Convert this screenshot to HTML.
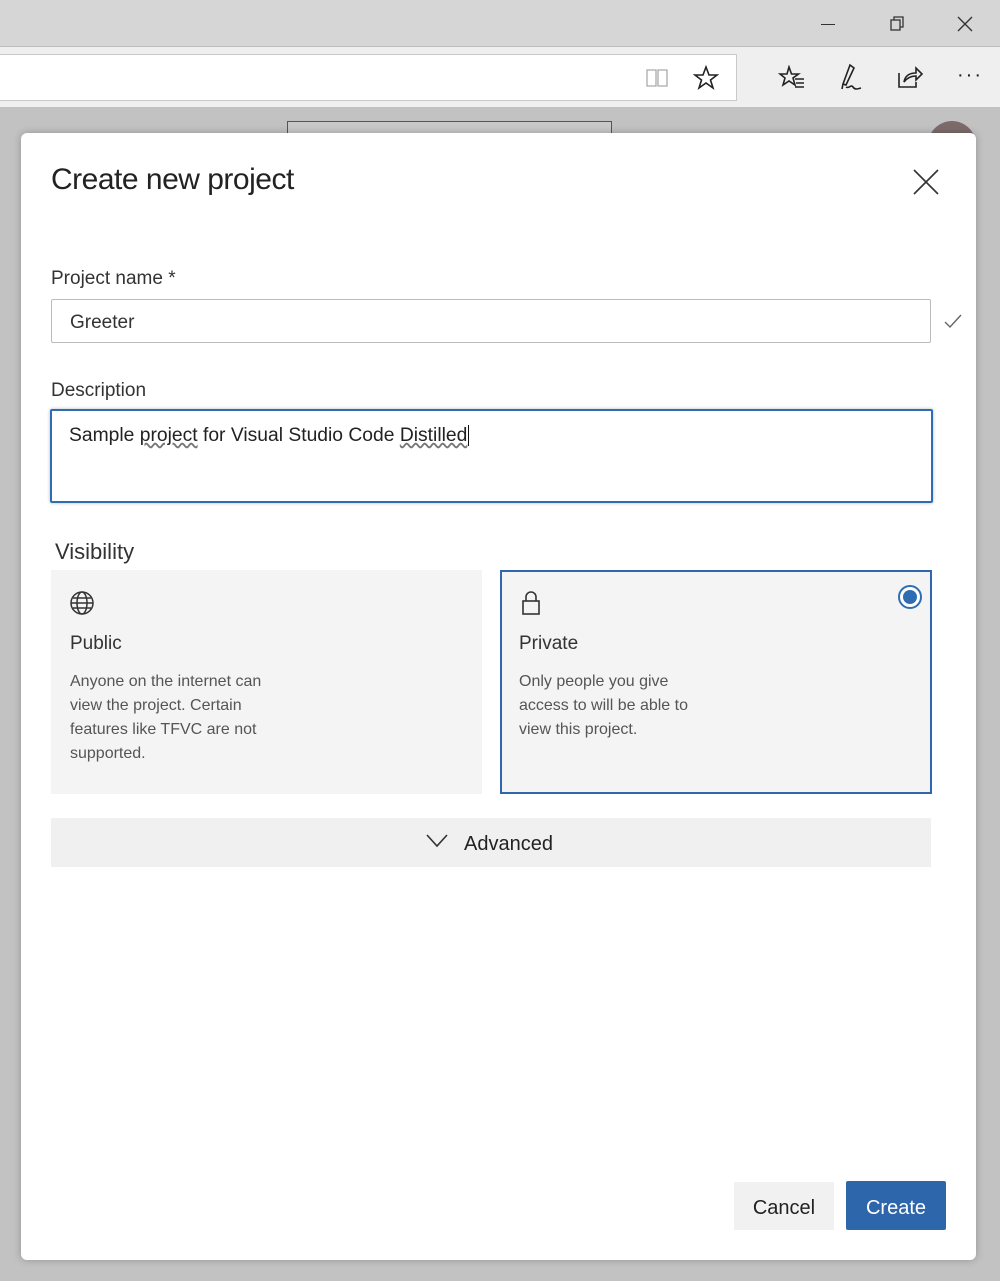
<!DOCTYPE html>
<html><head><meta charset="utf-8"><style>
*{box-sizing:border-box;margin:0;padding:0}
body{width:1000px;height:1281px;position:relative;overflow:hidden;background:#c4c4c4;font-family:"Liberation Sans",sans-serif;color:#222}
.abs{position:absolute}
.titlebar{left:0;top:0;width:1000px;height:47px;background:#d6d6d6;border-bottom:1px solid #bdbdbd}
.navbar{left:0;top:47px;width:1000px;height:60px;background:#efefef}
.addr{left:0;top:54px;width:737px;height:47px;background:#fff;border:1px solid #c9c9c9;border-left:none}
.page{left:0;top:107px;width:1000px;height:1174px;background:#c2c2c2}
.modal{left:21px;top:133px;width:955px;height:1127px;background:#fff;border-radius:6px;box-shadow:0 0 8px rgba(0,0,0,.25)}
.lbl{font-size:19px;color:#333}
.card{background:#f4f4f4}
.ct{font-size:19px;color:#333}
.cd{font-size:16px;line-height:24px;color:#555}
</style></head><body>
<div class="abs titlebar"></div>
<div class="abs" style="left:821px;top:24px;width:14px;height:1px;background:#333"></div>
<svg class="abs" style="left:888px;top:15px" width="18" height="18" viewBox="0 0 18 18" fill="none" stroke="#333" stroke-width="1.3"><rect x="3" y="5" width="9" height="10"/><path d="M6 5V2h9v10h-3"/></svg>
<svg class="abs" style="left:956px;top:15px" width="18" height="18" viewBox="0 0 18 18" stroke="#333" stroke-width="1.4"><path d="M2 2L16 16M16 2L2 16"/></svg>
<div class="abs navbar"></div>
<div class="abs addr"></div>
<svg class="abs" style="left:645px;top:67px" width="24" height="22" viewBox="0 0 24 22" fill="none" stroke="#aaa" stroke-width="1.3"><path d="M2 3h9v16H2zM13 3h9v16h-9z"/></svg>
<svg class="abs" style="left:693px;top:65px" width="26" height="26" viewBox="0 0 26 26" fill="none" stroke="#222" stroke-width="1.6"><path d="M13 2l3 8h8l-6.5 5 2.5 8-7-5-7 5 2.5-8L2 10h8z"/></svg>
<svg class="abs" style="left:778px;top:65px" width="28" height="26" viewBox="0 0 28 26" fill="none" stroke="#222" stroke-width="1.6"><path d="M11 2l2.5 7h7l-5.5 4 2 7-6-4-6 4 2-7L2 9h7z"/><path d="M17 14h9M18 18h8M17 22h9"/></svg>
<svg class="abs" style="left:838px;top:63px" width="26" height="30" viewBox="0 0 26 30" fill="none" stroke="#222" stroke-width="1.6"><path d="M12 2l4 3-8 17-3-1zM5 21l-1 5M8 24c3 2 5-3 7 0s4 2 8 1"/></svg>
<svg class="abs" style="left:896px;top:64px" width="28" height="26" viewBox="0 0 28 26" fill="none" stroke="#222" stroke-width="1.6"><path d="M3 9v14h17v-5M8 18c1-6 5-9 12-9V4l6 6-6 6v-4c-5 0-9 2-12 6z"/></svg>
<div class="abs" style="left:957px;top:64px;font-size:20px;color:#222;letter-spacing:2px">···</div>
<div class="abs page"></div>
<div class="abs" style="left:287px;top:121px;width:325px;height:20px;border:1.5px solid #555;border-bottom:none;background:#c9c9c9"></div>
<div class="abs" style="left:928px;top:121px;width:48px;height:48px;border-radius:50%;background:#7d6b6b"></div>
<div class="abs modal">
  <div class="abs" style="left:30px;top:30px;font-size:30px;color:#222;letter-spacing:-0.5px">Create new project</div>
  <svg class="abs" style="left:892px;top:36px" width="26" height="26" viewBox="0 0 26 26" stroke="#333" stroke-width="1.6"><path d="M1 1L25 25M25 1L1 25"/></svg>
  <div class="abs lbl" style="left:30px;top:135px">Project name *</div>
  <div class="abs" style="left:30px;top:166px;width:880px;height:44px;border:1px solid #bbb;border-radius:2px"></div>
  <div class="abs" style="left:49px;top:179px;font-size:19px;color:#333">Greeter</div>
  <svg class="abs" style="left:922px;top:180px" width="20" height="16" viewBox="0 0 20 16" fill="none" stroke="#666" stroke-width="1.4"><path d="M2 9l5 5L18 2"/></svg>
  <div class="abs lbl" style="left:30px;top:247px">Description</div>
  <div class="abs" style="left:29px;top:276px;width:883px;height:94px;border:2px solid #2f6db3;border-radius:2px;box-shadow:0 0 3px rgba(0,0,0,.3)"></div>
  <div class="abs" style="left:48px;top:292px;font-size:19.3px;color:#222">Sample <span style="text-decoration:underline wavy #777">project</span> for Visual Studio Code <span style="text-decoration:underline wavy #777">Distilled</span><span style="border-left:1.5px solid #111;margin-left:1px"></span></div>
  <div class="abs" style="left:34px;top:406px;font-size:22px;color:#333">Visibility</div>
  <div class="abs card" style="left:30px;top:437px;width:431px;height:224px"></div>
  <svg class="abs" style="left:48px;top:457px" width="26" height="26" viewBox="0 0 26 26" fill="none" stroke="#333" stroke-width="1.5"><circle cx="13" cy="13" r="11"/><ellipse cx="13" cy="13" rx="5" ry="11"/><path d="M2 13h22M4 8h18M4 18h18"/></svg>
  <div class="abs ct" style="left:49px;top:500px">Public</div>
  <div class="abs cd" style="left:49px;top:537px">Anyone on the internet can<br>view the project. Certain<br>features like TFVC are not<br>supported.</div>
  <div class="abs card" style="left:479px;top:437px;width:432px;height:224px;border:2.5px solid #2f66ad"></div>
  <svg class="abs" style="left:500px;top:457px" width="20" height="26" viewBox="0 0 20 26" fill="none" stroke="#333" stroke-width="1.6"><rect x="2" y="11" width="16" height="13"/><path d="M5 11V7a5 5 0 0110 0v4"/></svg>
  <div class="abs ct" style="left:498px;top:500px">Private</div>
  <div class="abs cd" style="left:498px;top:537px">Only people you give<br>access to will be able to<br>view this project.</div>
  <div class="abs" style="left:877px;top:452px;width:24px;height:24px;border-radius:50%;border:2px solid #2f6db3;background:#fff"></div>
  <div class="abs" style="left:882px;top:457px;width:14px;height:14px;border-radius:50%;background:#2f6db3"></div>
  <div class="abs" style="left:30px;top:685px;width:880px;height:49px;background:#f0f0f0"></div>
  <svg class="abs" style="left:404px;top:700px" width="24" height="16" viewBox="0 0 24 16" fill="none" stroke="#333" stroke-width="1.6"><path d="M2 2l10 11L22 2"/></svg>
  <div class="abs" style="left:443px;top:700px;font-size:20px;color:#222">Advanced</div>
  <div class="abs" style="left:713px;top:1049px;width:100px;height:48px;background:#f1f1f1"></div>
  <div class="abs" style="left:713px;top:1064px;width:100px;text-align:center;font-size:20px;color:#222">Cancel</div>
  <div class="abs" style="left:825px;top:1048px;width:100px;height:49px;background:#2e66ab;border-radius:2px"></div>
  <div class="abs" style="left:825px;top:1064px;width:100px;text-align:center;font-size:20px;color:#fff">Create</div>
</div>
</body></html>
